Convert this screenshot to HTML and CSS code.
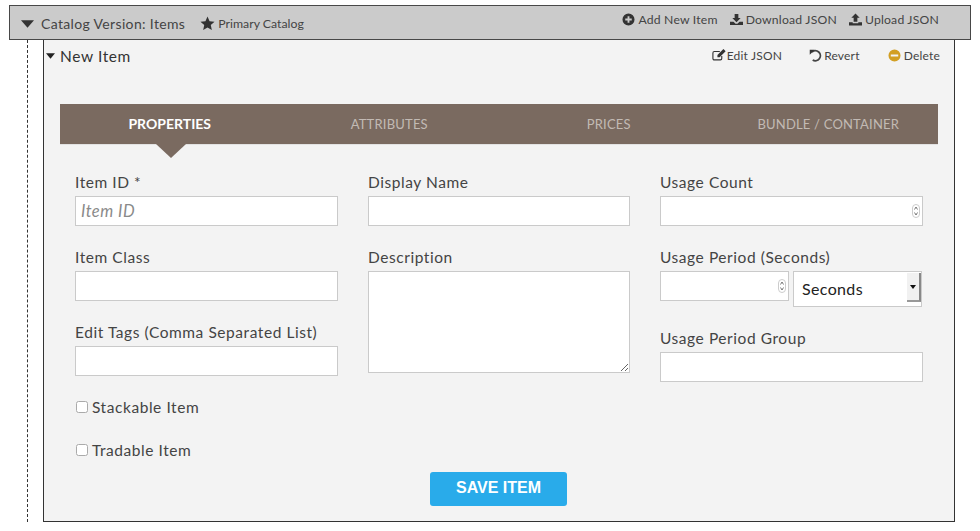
FILE: index.html
```html
<!DOCTYPE html>
<html lang="en">
<head>
<meta charset="utf-8">
<title>Catalog</title>
<link rel="stylesheet" href="styles.css">
</head>
<body>
<header class="catalog-bar">
  <div class="bar-left">
    <svg class="caret-lg" viewBox="0 0 14 8"><path d="M0 0h14L7 8z"/></svg>
    <span class="catalog-title">Catalog Version: Items</span>
    <svg class="ico star" viewBox="0 0 16 16"><path d="M8 .6l2.2 4.9 5.3.6-4 3.6 1.1 5.3L8 12.300l-4.600 2.700 1.100-5.300-4-3.600 5.300-.6z"/></svg>
    <span class="primary">Primary Catalog</span>
  </div>
  <nav class="bar-actions">
    <a class="act"><svg class="ico" viewBox="0 0 14 14"><path fill-rule="evenodd" d="M7 .5a6.500 6.500 0 1 0 0 13 6.500 6.500 0 0 0 0-13zM6 3.500h2V6h2.500v2H8v2.500H6V8H3.500V6H6z"/></svg>Add New Item</a>
    <a class="act"><svg class="ico" viewBox="0 0 14 14"><path d="M5 1h4v4.500h2.500L7 10 2.500 5.500H5z"/><path d="M0 9.500h3.800L6 11.500h2l2.200-2H14V13H0zM10.500 11.200h1v.8h-1zM12 11.200h1v.8h-1z"/></svg>Download JSON</a>
    <a class="act"><svg class="ico" viewBox="0 0 14 14"><path d="M7 .5L11.500 5H9v4.500H5V5H2.500z"/><path d="M0 10h4v1h6v-1h4v3.500H0z"/></svg>Upload JSON</a>
  </nav>
</header>

<div class="tree">
  <section class="panel">
    <div class="panel-head">
      <div class="panel-title">
        <svg class="caret-sm" viewBox="0 0 10 6"><path d="M0 0h10L5 6z"/></svg>
        <span>New Item</span>
      </div>
      <div class="panel-actions">
        <a class="pact pact-edit"><svg class="ico-edit" viewBox="0 0 15 13"><path fill="none" stroke="currentColor" stroke-width="1.200" d="M10.500 7.500v2.800a1.500 1.500 0 0 1-1.500 1.500H2.400A1.500 1.500 0 0 1 .9 10.300V4.200a1.500 1.500 0 0 1 1.500-1.500h6"/><path d="M12.300 0l2.400 2.400-6.500 6.500H5.800V6.500z"/></svg>Edit JSON</a>
        <a class="pact pact-revert"><svg class="ico" viewBox="0 0 14 14"><path fill="none" stroke="currentColor" stroke-width="2" d="M3.200 3.200A5.400 5.400 0 1 1 4 11.800"/><path d="M.8.800h5.400L.8 6.200z"/></svg>Revert</a>
        <a class="pact pact-delete"><svg class="ico gold" viewBox="0 0 14 14"><path fill-rule="evenodd" d="M7 .5a6.500 6.500 0 1 0 0 13 6.500 6.500 0 0 0 0-13zM3 6h8v2H3z"/></svg>Delete</a>
      </div>
    </div>

    <div class="tabs">
      <div class="tab tab-on">PROPERTIES</div>
      <div class="tab">ATTRIBUTES</div>
      <div class="tab">PRICES</div>
      <div class="tab">BUNDLE / CONTAINER</div>
    </div>

    <form class="form">
      <div class="col">
        <div class="field">
          <label class="lbl">Item ID *</label>
          <input class="inp" type="text" placeholder="Item ID">
        </div>
        <div class="field">
          <label class="lbl">Item Class</label>
          <input class="inp" type="text">
        </div>
        <div class="field">
          <label class="lbl">Edit Tags (Comma Separated List)</label>
          <input class="inp" type="text">
        </div>
        <label class="check check-first"><input class="box" type="checkbox"><span>Stackable Item</span></label>
        <label class="check"><input class="box" type="checkbox"><span>Tradable Item</span></label>
      </div>
      <div class="col">
        <div class="field">
          <label class="lbl">Display Name</label>
          <input class="inp" type="text">
        </div>
        <div class="field">
          <label class="lbl">Description</label>
          <textarea class="inp area"></textarea>
        </div>
      </div>
      <div class="col">
        <div class="field">
          <label class="lbl">Usage Count</label>
          <div class="num">
            <input class="inp" type="number">
            <svg class="spin" viewBox="0 0 8 14"><rect x=".5" y=".5" width="7" height="13" rx="3.500" fill="#fff" stroke="#ccc"/><path d="M2.500 5.500L4 3l1.500 2.500M2.500 8.500L4 11l1.500-2.500" fill="none" stroke="#555" stroke-width=".8"/></svg>
          </div>
        </div>
        <div class="field">
          <label class="lbl">Usage Period (Seconds)</label>
          <div class="period">
            <div class="num num-short">
              <input class="inp" type="number">
              <svg class="spin" viewBox="0 0 8 14"><rect x=".5" y=".5" width="7" height="13" rx="3.500" fill="#fff" stroke="#ccc"/><path d="M2.500 5.500L4 3l1.500 2.500M2.500 8.500L4 11l1.500-2.500" fill="none" stroke="#555" stroke-width=".8"/></svg>
            </div>
            <div class="sel">
              <select class="sel-native"><option>Seconds</option></select>
              <span class="sel-btn"><svg class="caret-xs" viewBox="0 0 6 4"><path d="M0 0h6L3 4z"/></svg></span>
            </div>
          </div>
        </div>
        <div class="field">
          <label class="lbl">Usage Period Group</label>
          <input class="inp" type="text">
        </div>
      </div>
    </form>
    <div class="save-row"><button class="save" type="button">SAVE ITEM</button></div>
  </section>
</div>
</body>
</html>
```
FILE: styles.css
```css
* { box-sizing: border-box; }
html, body { margin: 0; padding: 0; background: #fff; }
body { width: 980px; height: 531px; overflow: hidden; font-family: "Lato", "Open Sans", sans-serif; color: #3b3b3b; }

.catalog-bar {
  margin: 5px 9px 0;
  width: 962px;
  height: 35px;
  background: #cbcbcb;
  border: 1px solid #484848;
  display: flex;
  justify-content: space-between;
  padding: 0 31px 0 11px;
}
.bar-left { display: flex; align-items: center; height: 35px; }
.caret-lg { width: 13px; height: 8px; fill: #333; margin-right: 7px; }
.catalog-title { font-size: 14px; letter-spacing: .35px; color: #444; margin-right: 15px; }
.ico { width: 13px; height: 13px; fill: #333; flex: none; }
.star { width: 15px; height: 15px; margin-right: 3px; }
.primary { font-size: 12.300px; color: #444; }
.bar-actions { display: flex; gap: 12px; height: 27px; align-items: center; }
.act { display: flex; align-items: center; gap: 3px; font-size: 12.200px; letter-spacing: .2px; color: #444; }

.tree {
  margin-left: 27px;
  width: 928px;
  height: 482px;
  border-left: 1px dashed #333;
  padding-left: 15px;
}
.panel {
  width: 912px;
  height: 482px;
  background: #f3f3f3;
  border: 1px solid #333;
  border-width: 0 1px 1px 1px;
  padding: 0 16px;
  display: flex;
  flex-direction: column;
}
.panel-head { display: flex; justify-content: space-between; height: 64px; }
.panel-title { display: flex; align-items: center; height: 32px; margin-left: -14px; gap: 5px; font-size: 15.500px; letter-spacing: .6px; color: #333; }
.caret-sm { width: 9px; height: 6px; fill: #222; }
.panel-actions { display: flex; height: 30px; align-items: center; font-size: 12px; color: #444; margin-right: -2px; }
.pact { display: flex; align-items: center; gap: 3px; letter-spacing: .2px; }
.pact-edit { margin-right: 27px; gap: 1px; }
.pact-revert { margin-right: 28px; gap: 2px; }
.ico-edit { width: 14px; height: 12px; fill: #333; color: #333; }
.gold { fill: #d29f23; }

.tabs {
  height: 41px;
  background: #7a6a60;
  border-bottom: 1px solid #e2e2e2;
  display: grid;
  grid-template-columns: repeat(4, 219.500px);
  position: relative;
}
.tab { display: flex; align-items: center; justify-content: center; height: 40px; font-size: 13px; letter-spacing: .2px; color: #c2bab4; }
.tab-on { color: #fff; font-weight: 700; font-size: 14px; position: relative; letter-spacing: 0; padding-bottom: 1px; }
.tab-on::after {
  content: "";
  position: absolute;
  left: 96px;
  top: 40px;
  border-style: solid;
  border-width: 14px 15px 0;
  border-color: #7a6a60 transparent transparent;
}

.form { display: grid; grid-template-columns: 263px 262px 263px; gap: 30px; padding: 0 15px; margin-top: 27px; height: 300px; }
.col { display: flex; flex-direction: column; }
.field { display: flex; flex-direction: column; margin-bottom: 21px; }
.lbl { font-size: 15.500px; letter-spacing: .56px; line-height: 20px; margin-bottom: 4px; color: #444; }
.inp {
  width: 100%;
  height: 30px;
  background: #fff;
  border: 1px solid #cacaca;
  border-radius: 0;
  padding: 0 5px;
  font-family: inherit;
  font-size: 16.500px;
  letter-spacing: .5px;
  outline: none;
  display: block;
}
.inp::placeholder { color: #8a8a8a; font-style: italic; }
.inp[type="number"] { appearance: textfield; }
.area { height: 102px; resize: vertical; }
.num { position: relative; }
.num-short { width: 129px; flex: none; }
.spin { position: absolute; right: 3px; top: 8px; width: 8px; height: 14px; }
.period { display: flex; gap: 4px; align-items: flex-start; height: 36px; }
.sel { position: relative; width: 129px; height: 36px; border: 1px solid #cacaca; background: #fff; }
.sel-native { appearance: none; width: 100%; height: 32px; border: 0; background: transparent; padding: 0 8px; font-family: inherit; font-size: 16px; letter-spacing: .35px; color: #222; outline: none; }
.sel-btn { position: absolute; right: 0; top: 1px; width: 14px; height: 29px; background: #f1f1f1; border-right: 2px solid #888; border-bottom: 2px solid #999; display: flex; align-items: center; justify-content: center; }
.caret-xs { width: 6px; height: 4px; fill: #111; }
.check { display: flex; align-items: center; gap: 4px; height: 24px; font-size: 15.500px; letter-spacing: .56px; color: #444; margin-bottom: 19px; }
.check-first { margin-top: -2px; }
.box { appearance: none; width: 12px; height: 12px; margin: 0 0 0 1px; border: 1px solid #aaa; border-radius: 2.500px; background: #fff; }

.save-row { display: flex; justify-content: center; padding-right: 1px; }
.save { width: 137px; height: 34px; border: 0; border-radius: 3px; background: #29abea; color: #fff; font-family: "Liberation Sans", Arial, sans-serif; font-weight: 700; font-size: 16px; padding: 0 0 2px; }
```
